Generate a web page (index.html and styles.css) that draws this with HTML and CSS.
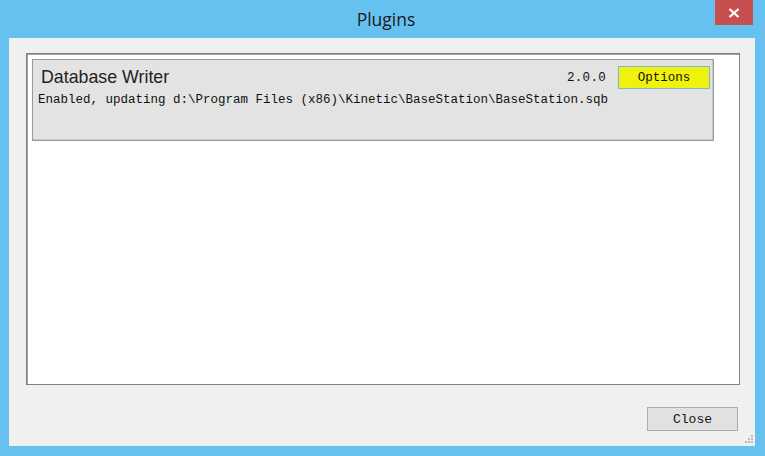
FILE: index.html
```html
<!DOCTYPE html>
<html>
<head>
<meta charset="utf-8">
<link rel="stylesheet" href="styles.css">
</head>
<body>
<div class="window">
  <div class="titlebar">
    <div class="title">Plugins</div>
    <div class="close-x">
      <svg width="12" height="10" viewBox="0 0 12 10"><path d="M1.5 1 L10.5 9 M10.5 1 L1.5 9" stroke="#fff" stroke-width="2.2" fill="none"/></svg>
    </div>
  </div>
  <div class="client">
    <div class="listbox">
      <div class="item">
        <div class="item-top">
          <div class="name">Database Writer</div>
          <div class="version">2.0.0</div>
          <div class="options">Options</div>
        </div>
        <div class="status">Enabled, updating d:\Program Files (x86)\Kinetic\BaseStation\BaseStation.sqb</div>
      </div>
    </div>
    <div class="footer">
      <div class="btn">Close</div>
    </div>
    <svg class="grip" width="10" height="10" viewBox="0 0 10 10">
      <g fill="#b9b9b9">
        <rect x="7" y="1" width="2" height="2"/>
        <rect x="4" y="4" width="2" height="2"/><rect x="7" y="4" width="2" height="2"/>
        <rect x="1" y="7" width="2" height="2"/><rect x="4" y="7" width="2" height="2"/><rect x="7" y="7" width="2" height="2"/>
      </g>
    </svg>
  </div>
</div>
</body>
</html>
```

FILE: styles.css
```css
html, body {
  margin: 0;
  padding: 0;
}
body {
  width: 765px;
  height: 456px;
  overflow: hidden;
}
.window {
  width: 765px;
  height: 456px;
  box-sizing: border-box;
  background: #67c1f0;
  padding: 0 10px 10px 9px;
  display: flex;
  flex-direction: column;
}
.titlebar {
  height: 38px;
  flex: none;
  position: relative;
  display: flex;
  justify-content: center;
}
.title {
  font-family: "Open Sans", "Noto Sans", sans-serif;
  font-size: 17.5px;
  color: #1a1a1a;
  line-height: 38px;
  margin-left: 8px;
}
.close-x {
  position: absolute;
  right: 2px;
  top: 0;
  width: 38px;
  height: 25px;
  background: #c7504f;
  display: flex;
  align-items: center;
  justify-content: center;
}
.client {
  flex: 1;
  background: #f0f0f0;
  display: flex;
  flex-direction: column;
  padding: 15px 15px 15px 17px;
  position: relative;
}
.listbox {
  flex: 1;
  background: #fff;
  border: 1px solid #828282;
  box-shadow: inset 1px 1px 0 #a0a0a0;
  padding: 5px 25px 0 5px;
}
.item {
  height: 82px;
  box-sizing: border-box;
  background: #e3e3e3;
  border: 1px solid #9a9a9a;
  box-shadow: inset -1px -1px 0 #c8c8c8;
  padding: 6px 3px 0 5px;
}
.item-top {
  display: flex;
  align-items: center;
  height: 23px;
}
.name {
  font-family: "Liberation Sans", Arial, sans-serif;
  font-size: 17.8px;
  color: #222;
  margin-left: 3px;
  flex: 1;
}
.version, .status, .options, .btn {
  font-family: "Liberation Mono", "Courier New", monospace;
  font-size: 12.5px;
  color: #111;
}
.version {
  margin-right: 12px;
  letter-spacing: 0.3px;
}
.options {
  width: 92px;
  height: 23px;
  box-sizing: border-box;
  background: #eef20c;
  border: 1px solid #7fb4e0;
  display: flex;
  align-items: center;
  justify-content: center;
}
.status {
  margin-top: 4px;
  white-space: nowrap;
}
.footer {
  display: flex;
  justify-content: flex-end;
  padding-top: 22px;
  padding-right: 2px;
}
.btn {
  width: 91px;
  height: 24px;
  box-sizing: border-box;
  background: #e1e1e1;
  border: 1px solid #adadad;
  display: flex;
  align-items: center;
  justify-content: center;
  font-size: 13px;
}
.grip {
  position: absolute;
  right: 1px;
  bottom: 2px;
}
```
